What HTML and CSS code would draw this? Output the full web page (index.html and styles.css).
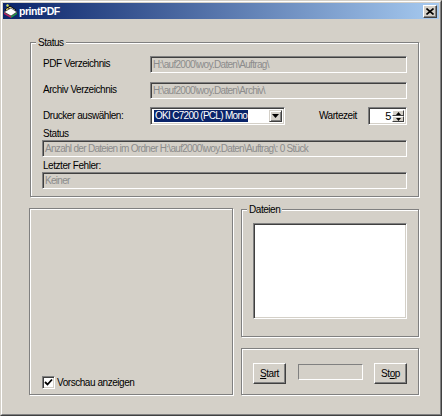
FILE: index.html
```html
<!DOCTYPE html>
<html>
<head>
<meta charset="utf-8">
<link rel="stylesheet" href="styles.css">
</head>
<body>
<div class="window">
  <div class="frame">
    <div class="titlebar">
      <svg class="appicon" width="15" height="15" viewBox="0 0 15 15">
        <polygon points="2,6 7,2 13,6 8,10" fill="#ffffe0" stroke="#000" stroke-width="1"/>
        <polygon points="3,5 7,3 8,4 4,6" fill="#e8d040"/>
        <line x1="4" y1="3" x2="10" y2="7" stroke="#000" stroke-width="1"/>
        <polygon points="1,8 8,12 8,14 1,10" fill="#c02060"/>
        <polygon points="8,12 14,8 14,10 8,14" fill="#20a040"/>
        <polygon points="1,8 8,4 14,8 8,12" fill="#ffffff" stroke="#404040" stroke-width="0.8"/>
        <polygon points="3,1 5,0 6,2 4,3" fill="#d0e060"/>
      </svg>
      <span class="title">printPDF</span>
      <div class="closebtn">
        <svg width="8" height="7" viewBox="0 0 8 7"><path d="M0.5 0.5 L7.5 6.5 M7.5 0.5 L0.5 6.5" stroke="#000" stroke-width="1.6"/></svg>
      </div>
    </div>
    <div class="client">
      <div class="group status-group">
        <span class="legend">Status</span>
        <div class="row first">
          <span class="label">PDF Verzeichnis</span>
          <div class="textbox wide">H:\auf2000\woy.Daten\Auftrag\</div>
        </div>
        <div class="row second">
          <span class="label">Archiv Verzeichnis</span>
          <div class="textbox wide">H:\auf2000\woy.Daten\Archiv\</div>
        </div>
        <div class="row third">
          <span class="label">Drucker auswählen:</span>
          <div class="combo">
            <span class="combo-sel">OKI C7200 (PCL) Mono</span>
            <span class="combo-btn"><svg width="7" height="4" viewBox="0 0 7 4"><polygon points="0,0 7,0 3.5,4" fill="#000"/></svg></span>
          </div>
          <span class="wlabel">Wartezeit</span>
          <div class="spin">
            <span class="spin-val">5</span>
            <span class="spin-btns">
              <span class="spin-up"><svg width="5" height="3" viewBox="0 0 5 3"><polygon points="2.5,0 5,3 0,3" fill="#000"/></svg></span>
              <span class="spin-down"><svg width="5" height="3" viewBox="0 0 5 3"><polygon points="0,0 5,0 2.5,3" fill="#000"/></svg></span>
            </span>
          </div>
        </div>
        <div class="sublabel">Status</div>
        <div class="textbox full">Anzahl der Dateien im Ordner H:\auf2000\woy.Daten\Auftrag\: 0 Stück</div>
        <div class="sublabel">Letzter Fehler:</div>
        <div class="textbox full">Keiner</div>
      </div>
      <div class="bottom">
        <div class="panel preview">
          <div class="check-row">
            <span class="checkbox"><svg width="9" height="9" viewBox="0 0 9 9"><path d="M1 4 L3.5 6.5 L8 1.5" stroke="#000" stroke-width="1.8" fill="none"/></svg></span>
            <span class="check-label">Vorschau anzeigen</span>
          </div>
        </div>
        <div class="rightcol">
          <div class="group files">
            <span class="legend">Dateien</span>
            <div class="listbox"></div>
          </div>
          <div class="panel controls">
            <div class="button"><span class="u">S</span>tart</div>
            <div class="progress"></div>
            <div class="button">St<span class="u">o</span>p</div>
          </div>
        </div>
      </div>
    </div>
  </div>
</div>
</body>
</html>
```

FILE: styles.css
```css
* { box-sizing: border-box; }
html, body { margin: 0; padding: 0; background: #d4d0c8; }
body {
  font-family: "Liberation Sans", Arial, sans-serif;
  font-size: 10px;
  letter-spacing: -0.45px;
  line-height: 13px;
  color: #000;
}
.window {
  width: 442px;
  height: 416px;
  border: 1px solid;
  border-color: #d4d0c8 #404040 #404040 #d4d0c8;
  background: #d4d0c8;
}
.frame {
  height: 100%;
  border: 1px solid;
  border-color: #fff #808080 #808080 #fff;
  padding: 1px;
  display: flex;
  flex-direction: column;
}
.titlebar {
  height: 16px;
  flex: none;
  display: flex;
  align-items: center;
  background: linear-gradient(to right, #0a246a, #a6caf0);
  color: #fff;
}
.appicon { flex: none; }
.title {
  font-weight: bold;
  font-size: 10.5px;
  margin-left: 1px;
}
.closebtn {
  margin-left: auto;
  margin-right: 2px;
  width: 14px;
  height: 13px;
  background: #d4d0c8;
  border: 1px solid;
  border-color: #fff #404040 #404040 #fff;
  box-shadow: inset -1px -1px 0 #808080;
  display: flex;
  align-items: center;
  justify-content: center;
}
.client {
  flex: 1;
  padding: 23px 0 0 27px;
}
.group {
  position: relative;
  border: 1px solid #808080;
  box-shadow: inset 1px 1px 0 #fff, 1px 1px 0 #fff;
}
.legend {
  position: absolute;
  top: -7px;
  left: 5px;
  padding: 0 2px;
  background: #d4d0c8;
  line-height: 13px;
}
.status-group {
  width: 389px;
  height: 155px;
  padding: 0 11px;
}
.row {
  display: flex;
  align-items: center;
}
.row.first { margin-top: 13px; }
.row.second { margin-top: 9px; }
.row.third { margin-top: 8px; }
.label {
  width: 108px;
  flex: none;
  padding-left: 1px;
  margin-top: -2px;
}
.textbox {
  height: 17px;
  border: 1px solid;
  border-color: #808080 #fff #fff #808080;
  box-shadow: inset 1px 1px 0 #404040;
  color: #8c8c8c;
  padding: 1px 0 0 2px;
  white-space: nowrap;
  overflow: hidden;
  letter-spacing: -0.7px;
}
.textbox.wide { width: 257px; }
.textbox.full { width: 365px; }
.sublabel {
  margin-top: 2px;
  padding-left: 1px;
}
.combo {
  width: 135px;
  height: 18px;
  background: #fff;
  border: 1px solid;
  border-color: #808080 #fff #fff #808080;
  box-shadow: inset 1px 1px 0 #404040, inset -1px -1px 0 #d4d0c8;
  padding: 2px 2px 2px 3px;
  display: flex;
  align-items: stretch;
}
.combo-sel {
  background: #0a246a;
  color: #fff;
  padding: 0 1px;
  line-height: 12px;
  white-space: nowrap;
  letter-spacing: -0.7px;
}
.combo-btn {
  margin-left: auto;
  width: 13px;
  background: #d4d0c8;
  border: 1px solid;
  border-color: #d4d0c8 #404040 #404040 #d4d0c8;
  box-shadow: inset 1px 1px 0 #fff, inset -1px -1px 0 #808080;
  display: flex;
  align-items: center;
  justify-content: center;
}
.wlabel {
  margin-left: 34px;
  margin-top: -1px;
}
.spin {
  margin-left: auto;
  width: 39px;
  height: 18px;
  background: #fff;
  border: 1px solid;
  border-color: #808080 #fff #fff #808080;
  box-shadow: inset 1px 1px 0 #404040, inset -1px -1px 0 #d4d0c8;
  padding: 2px;
  display: flex;
}
.spin-val {
  flex: 1;
  text-align: right;
  padding-right: 1px;
  line-height: 13px;
  font-size: 11px;
}
.spin-btns {
  width: 12px;
  display: flex;
  flex-direction: column;
}
.spin-up, .spin-down {
  flex: 1;
  background: #d4d0c8;
  border: 1px solid;
  border-color: #fff #404040 #404040 #fff;
  display: flex;
  align-items: center;
  justify-content: center;
}
.bottom {
  display: flex;
  gap: 8px;
  margin-top: 11px;
  margin-left: -1px;
}
.panel {
  border: 1px solid #808080;
  box-shadow: inset 1px 1px 0 #fff, 1px 1px 0 #fff;
}
.preview {
  width: 204px;
  height: 187px;
  display: flex;
  flex-direction: column;
  justify-content: flex-end;
  padding: 0 0 5px 12px;
}
.check-row {
  display: flex;
  align-items: center;
}
.checkbox {
  width: 13px;
  height: 13px;
  background: #fff;
  border: 1px solid;
  border-color: #808080 #fff #fff #808080;
  box-shadow: inset 1px 1px 0 #404040, inset -1px -1px 0 #d4d0c8;
  display: flex;
  align-items: center;
  justify-content: center;
}
.check-label { margin-left: 2px; }
.rightcol {
  width: 178px;
  display: flex;
  flex-direction: column;
}
.files {
  margin-top: 1px;
  height: 128px;
  padding: 13px 11px 0 11px;
}
.listbox {
  height: 96px;
  background: #fff;
  border: 1px solid;
  border-color: #808080 #fff #fff #808080;
  box-shadow: inset 1px 1px 0 #404040, inset -1px -1px 0 #d4d0c8;
}
.controls {
  margin-top: 11px;
  height: 47px;
  display: flex;
  align-items: flex-start;
  padding: 14px 0 0 11px;
}
.button {
  width: 33px;
  height: 21px;
  border: 1px solid;
  border-color: #fff #404040 #404040 #fff;
  box-shadow: inset -1px -1px 0 #808080;
  display: flex;
  align-items: center;
  justify-content: center;
  padding-bottom: 1px;
}
.u { text-decoration: underline; }
.progress {
  width: 65px;
  height: 16px;
  margin: 1px 11px 0 12px;
  border: 1px solid;
  border-color: #808080 #fff #fff #808080;
}
```
